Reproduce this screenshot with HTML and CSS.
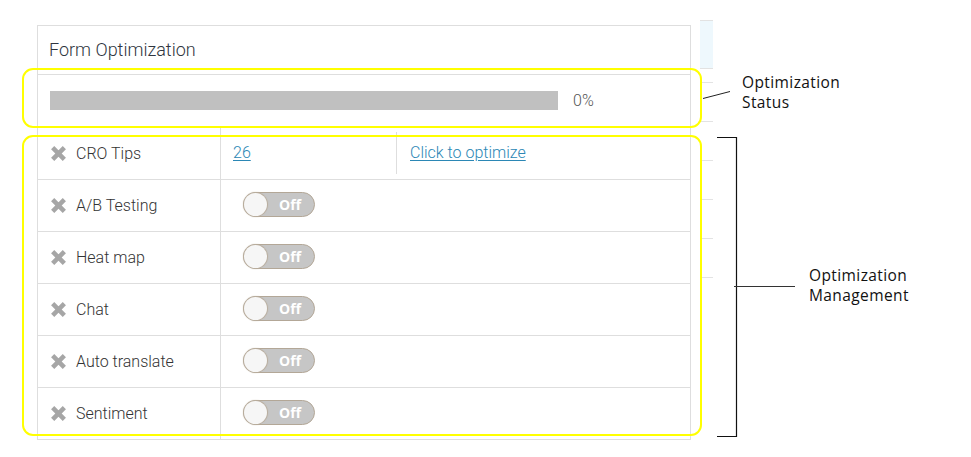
FILE: index.html
```html
<!DOCTYPE html>
<html>
<head>
<meta charset="utf-8">
<link rel="stylesheet" href="styles.css">
</head>
<body>
<div class="canvas">
  <div class="panel">
    <div class="panel-head">Form Optimization</div>
    <div class="progress-row">
      <div class="bar"></div>
      <span class="pct">0%</span>
    </div>
    <div class="row">
      <div class="name"><svg class="x" viewBox="0 0 16 16"><path d="M1 4 4 1 8 5 12 1 15 4 11 8 15 12 12 15 8 11 4 15 1 12 5 8Z"/></svg>CRO Tips</div>
      <div class="val"><a class="link" href="#">26</a></div>
      <div class="act"><a class="link" href="#">Click to optimize</a></div>
    </div>
    <div class="row">
      <div class="name"><svg class="x" viewBox="0 0 16 16"><path d="M1 4 4 1 8 5 12 1 15 4 11 8 15 12 12 15 8 11 4 15 1 12 5 8Z"/></svg>A/B Testing</div>
      <div class="tog-cell"><span class="toggle"><span class="knob"></span><span class="off">Off</span></span></div>
    </div>
    <div class="row">
      <div class="name"><svg class="x" viewBox="0 0 16 16"><path d="M1 4 4 1 8 5 12 1 15 4 11 8 15 12 12 15 8 11 4 15 1 12 5 8Z"/></svg>Heat map</div>
      <div class="tog-cell"><span class="toggle"><span class="knob"></span><span class="off">Off</span></span></div>
    </div>
    <div class="row">
      <div class="name"><svg class="x" viewBox="0 0 16 16"><path d="M1 4 4 1 8 5 12 1 15 4 11 8 15 12 12 15 8 11 4 15 1 12 5 8Z"/></svg>Chat</div>
      <div class="tog-cell"><span class="toggle"><span class="knob"></span><span class="off">Off</span></span></div>
    </div>
    <div class="row">
      <div class="name"><svg class="x" viewBox="0 0 16 16"><path d="M1 4 4 1 8 5 12 1 15 4 11 8 15 12 12 15 8 11 4 15 1 12 5 8Z"/></svg>Auto translate</div>
      <div class="tog-cell"><span class="toggle"><span class="knob"></span><span class="off">Off</span></span></div>
    </div>
    <div class="row last">
      <div class="name"><svg class="x" viewBox="0 0 16 16"><path d="M1 4 4 1 8 5 12 1 15 4 11 8 15 12 12 15 8 11 4 15 1 12 5 8Z"/></svg>Sentiment</div>
      <div class="tog-cell"><span class="toggle"><span class="knob"></span><span class="off">Off</span></span></div>
    </div>
  </div>

  <div class="side-blue"></div>
  <div class="tick t1"></div>
  <div class="tick t2"></div>
  <div class="tick t3"></div>
  <div class="tick t4"></div>
  <div class="tick t5"></div>
  <div class="tick t6"></div>

  <div class="hl hl-status"></div>
  <div class="hl hl-manage"></div>

  <svg class="anno-lines" width="971" height="457" viewBox="0 0 971 457">
    <line x1="703" y1="98.5" x2="730" y2="91.5" stroke="#222" stroke-width="1"/>
    <path d="M717 137.5H736.5V436.5H717" fill="none" stroke="#111" stroke-width="1.2"/>
    <line x1="734" y1="286.5" x2="795" y2="286.5" stroke="#333" stroke-width="1"/>
  </svg>
  <div class="anno anno-status"><div>Optimization</div><div>Status</div></div>
  <div class="anno anno-manage"><div>Optimization</div><div>Management</div></div>
</div>
</body>
</html>
```
FILE: styles.css
```css
* { box-sizing: border-box; }
html, body { margin: 0; padding: 0; background: #fff; }
.canvas {
  position: relative;
  width: 971px;
  height: 457px;
  overflow: hidden;
  padding: 25px 0 0 37px;
  font-family: Roboto, "Liberation Sans", sans-serif;
}
.panel {
  width: 654px;
  border: 1px solid #dedede;
  border-bottom: none;
}
.panel-head {
  height: 49px;
  border-bottom: 1px solid #dedede;
  padding: 12px 0 0 11px;
  font-size: 18px;
  font-weight: 300;
  color: #2f3540;
  line-height: 24px;
}
.progress-row {
  height: 53px;
  border-bottom: 1px solid #dedede;
  display: flex;
  align-items: center;
  padding: 0 0 2px 12px;
}
.bar {
  width: 508px;
  height: 19px;
  background: #c0c0c0;
}
.pct {
  margin-left: 15px;
  font-size: 16px;
  font-weight: 300;
  color: #555;
}
.row {
  height: 52px;
  border-bottom: 1px solid #dedede;
  display: flex;
}
.name {
  width: 183px;
  border-right: 1px solid #dedede;
  display: flex;
  align-items: center;
  padding-left: 12px;
  font-size: 16px;
  font-weight: 300;
  color: #333;
}
.x {
  width: 17px;
  height: 17px;
  fill: #a6a6a6;
  margin-right: 9px;
}
.val, .act { align-self: stretch; }
.val {
  width: 176px;
  margin: 4px 0 5px;
  border-right: 1px solid #dedede;
  padding: 0 0 2px 12px;
  display: flex;
  align-items: center;
}
.act {
  padding: 0 0 3px 13px;
  display: flex;
  align-items: center;
}
.link {
  color: #2b87b5;
  font-size: 16px;
  font-weight: 300;
  text-decoration: underline;
  text-underline-offset: 2px;
}
.tog-cell {
  display: flex;
  align-items: center;
  padding: 0 0 3px 22px;
}
.toggle {
  position: relative;
  width: 72px;
  height: 25px;
  border-radius: 13px;
  background: #c6c6c6;
  border: 1px solid #b3a797;
  display: block;
}
.knob {
  position: absolute;
  left: 0;
  top: 0;
  width: 23px;
  height: 23px;
  border-radius: 50%;
  background: #f6f6f6;
  box-shadow: 0 0 1px 1px #b8ac9c;
}
.off {
  position: absolute;
  left: 35px;
  top: 2px;
  font-family: "Open Sans", "Liberation Sans", sans-serif;
  font-weight: 700;
  font-size: 14px;
  line-height: 19px;
  color: #fff;
}
.side-blue {
  position: absolute;
  left: 700px;
  top: 20px;
  width: 13px;
  height: 49px;
  background: #eef8fd;
  border-top: 1px solid #e2e2e2;
  border-bottom: 1px solid #e2e2e2;
}
.tick {
  position: absolute;
  left: 700px;
  width: 13px;
  height: 1px;
  background: #e3e3e3;
}
.t1 { top: 82px; }
.t2 { top: 121px; }
.t3 { top: 160px; }
.t4 { top: 199px; }
.t5 { top: 238px; }
.t6 { top: 277px; }
.hl {
  position: absolute;
  left: 22px;
  width: 680px;
  border: 2px solid #ffff00;
  border-radius: 11px;
}
.hl-status { top: 68px; height: 60px; }
.hl-manage { top: 135px; height: 301px; }
.anno-lines {
  position: absolute;
  left: 0;
  top: 0;
}
.anno {
  position: absolute;
  font-family: "Open Sans", "DejaVu Sans", sans-serif;
  font-size: 15.5px;
  line-height: 20px;
  color: #111;
  letter-spacing: 0.4px;
}
.anno-status { left: 742px; top: 72px; }
.anno-manage { left: 809px; top: 265px; }
```
